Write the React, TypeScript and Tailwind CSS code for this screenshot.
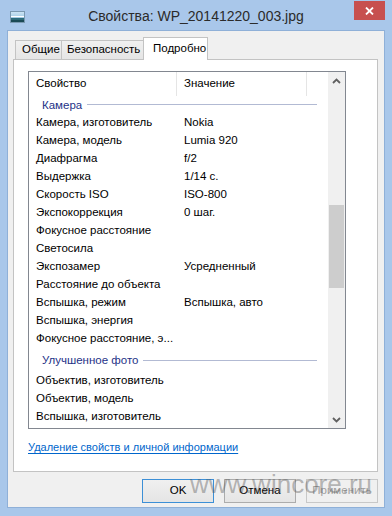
import React from "react";

const rows1: [string, string][] = [
  ["Камера, изготовитель", "Nokia"],
  ["Камера, модель", "Lumia 920"],
  ["Диафрагма", "f/2"],
  ["Выдержка", "1/14 с."],
  ["Скорость ISO", "ISO-800"],
  ["Экспокоррекция", "0 шаг."],
  ["Фокусное расстояние", ""],
  ["Светосила", ""],
  ["Экспозамер", "Усредненный"],
  ["Расстояние до объекта", ""],
  ["Вспышка, режим", "Вспышка, авто"],
  ["Вспышка, энергия", ""],
  ["Фокусное расстояние, э...", ""],
];

const rows2: [string, string][] = [
  ["Объектив, изготовитель", ""],
  ["Объектив, модель", ""],
  ["Вспышка, изготовитель", ""],
];

function Row({ name, value }: { name: string; value: string }) {
  return (
    <div className="flex h-[18px] items-center text-[#000]">
      <div className="w-[148px] pl-[7px] whitespace-nowrap">{name}</div>
      <div className="pl-[7px] whitespace-nowrap">{value}</div>
    </div>
  );
}

function Group({ label, h, first }: { label: string; h: string; first?: boolean }) {
  return (
    <div className={`flex ${h} ${first ? "items-start pt-[2px]" : "items-center"} pl-[13px] pr-[11px]`}>
      <span className="text-[#1e3287] whitespace-nowrap leading-[14px]">{label}</span>
      <div className={`flex-1 ml-[5px] h-px bg-[#b2bad3] ${first ? "mt-[6px]" : ""}`} />
    </div>
  );
}

function Chevron({ up }: { up?: boolean }) {
  return (
    <svg width="9" height="6" viewBox="0 0 9 6">
      {up ? (
        <path d="M1 5 L4.5 1.5 L8 5" fill="none" stroke="#606060" strokeWidth="1.8" />
      ) : (
        <path d="M1 1 L4.5 4.5 L8 1" fill="none" stroke="#606060" strokeWidth="1.8" />
      )}
    </svg>
  );
}

export default function App() {
  return (
    <div
      className="relative w-[392px] h-[516px] bg-[#a9c7ea] flex flex-col overflow-hidden text-[11.5px]"
      style={{ fontFamily: '"Liberation Sans", Arial, sans-serif' }}
    >
      {/* Title bar */}
      <div className="h-[30px] flex items-start shrink-0">
        <div className="w-[38px] pl-[10px] pt-[11px]">
          <svg width="15" height="12" viewBox="0 0 15 12">
            <defs>
              <linearGradient id="sky" x1="0" y1="0" x2="0" y2="1">
                <stop offset="0" stopColor="#cfe6f5" />
                <stop offset="1" stopColor="#7fb6d8" />
              </linearGradient>
            </defs>
            <rect x="0.5" y="0.5" width="14" height="11" fill="url(#sky)" stroke="#7a98b0" />
            <rect x="1" y="5" width="13" height="1" fill="#ffffff" />
            <rect x="1" y="7" width="13" height="4" fill="#2d6b7a" />
            <rect x="1" y="9" width="13" height="2" fill="#1b4a55" />
          </svg>
        </div>
        <div className="flex-1 text-center pt-[7px] text-[14px] text-[#2b2b2b] whitespace-nowrap leading-[18px]">
          Свойства: WP_20141220_003.jpg
        </div>
        <div className="w-[38px] pt-[1px]">
          <div className="w-[31px] h-[19px] bg-[#c7504f] flex items-center justify-center">
            <svg width="9" height="8" viewBox="0 0 9 8">
              <path d="M1 0.5 L8 7.5 M8 0.5 L1 7.5" stroke="#ffffff" strokeWidth="1.8" />
            </svg>
          </div>
        </div>
      </div>

      {/* Client */}
      <div className="flex-1 mx-[7px] mb-[8px] bg-[#f0f0f0] border border-[#8fb0d8] flex flex-col pl-[5px] pr-[6px] pt-[6px] pb-[4px]">
        {/* Tabs */}
        <div className="h-[22px] flex items-end pl-[2px] relative z-10 shrink-0">
          <div className="w-[47px] h-[19px] border border-b-0 border-[#c3c3c3] bg-gradient-to-b from-[#f0f0f0] to-[#e5e5e5] pl-[6px] flex items-center text-[#000]">
            Общие
          </div>
          <div className="w-[83px] ml-[-1px] h-[19px] border border-b-0 border-[#c3c3c3] bg-gradient-to-b from-[#f0f0f0] to-[#e5e5e5] pl-[5px] flex items-center text-[#000]">
            Безопасность
          </div>
          <div className="w-[65px] ml-[-1px] h-[23px] mb-[-1px] border border-b-0 border-[#c3c3c3] bg-white pl-[9px] pt-[3px] text-[#000] leading-[14px]">
            Подробно
          </div>
        </div>

        {/* Panel */}
        <div className="h-[413px] bg-white border border-[#c3c3c3] pl-[14px] pt-[11px] flex flex-col shrink-0">
          <div className="w-[318px] h-[358px] border border-[#828790] flex">
            <div className="flex-1 flex flex-col overflow-hidden">
              <div className="h-[24px] flex items-stretch shrink-0">
                <div className="w-[148px] pl-[7px] flex items-center border-r border-[#e5e5e5]">Свойство</div>
                <div className="w-[130px] pl-[7px] flex items-center border-r border-[#e5e5e5]">Значение</div>
              </div>
              <Group label="Камера" h="h-[18px]" first />
              {rows1.map(([n, v]) => (
                <Row key={n} name={n} value={v} />
              ))}
              <Group label="Улучшенное фото" h="h-[24px]" />
              {rows2.map(([n, v]) => (
                <Row key={n} name={n} value={v} />
              ))}
            </div>
            <div className="w-[17px] bg-[#f0f0f0] flex flex-col shrink-0">
              <div className="h-[17px] flex items-center justify-center">
                <Chevron up />
              </div>
              <div className="flex-1 px-[1px]">
                <div className="mt-[116px] h-[83px] bg-[#cdcdcd]" />
              </div>
              <div className="h-[17px] flex items-center justify-center">
                <Chevron />
              </div>
            </div>
          </div>
          <div className="mt-[11px] leading-[14px] text-[11px]">
            <span className="text-[#0066cc] underline underline-offset-2">
              Удаление свойств и личной информации
            </span>
          </div>
        </div>

        {/* Buttons */}
        <div className="mt-[7px] flex justify-end gap-[10px] shrink-0">
          <div className="w-[72px] h-[24px] border border-[#3c8fd6] bg-gradient-to-b from-[#f0f0f0] to-[#e5e5e5] flex items-center justify-center text-[#000]">
            OK
          </div>
          <div className="w-[72px] h-[24px] border border-[#acacac] bg-gradient-to-b from-[#f0f0f0] to-[#e5e5e5] flex items-center justify-center text-[#000]">
            Отмена
          </div>
          <div className="w-[72px] h-[24px] border border-[#c8c8c8] bg-[#f0f0f0] flex items-center justify-center text-[#a0a0a0]">
            Применить
          </div>
        </div>
      </div>

      {/* Watermark */}
      <div
        className="absolute left-[190px] top-[471px] text-[26px] leading-none text-[rgba(80,80,80,0.4)] pointer-events-none whitespace-nowrap"
        style={{ fontWeight: 300 }}
      >
        www.wincore.ru
      </div>
    </div>
  );
}
